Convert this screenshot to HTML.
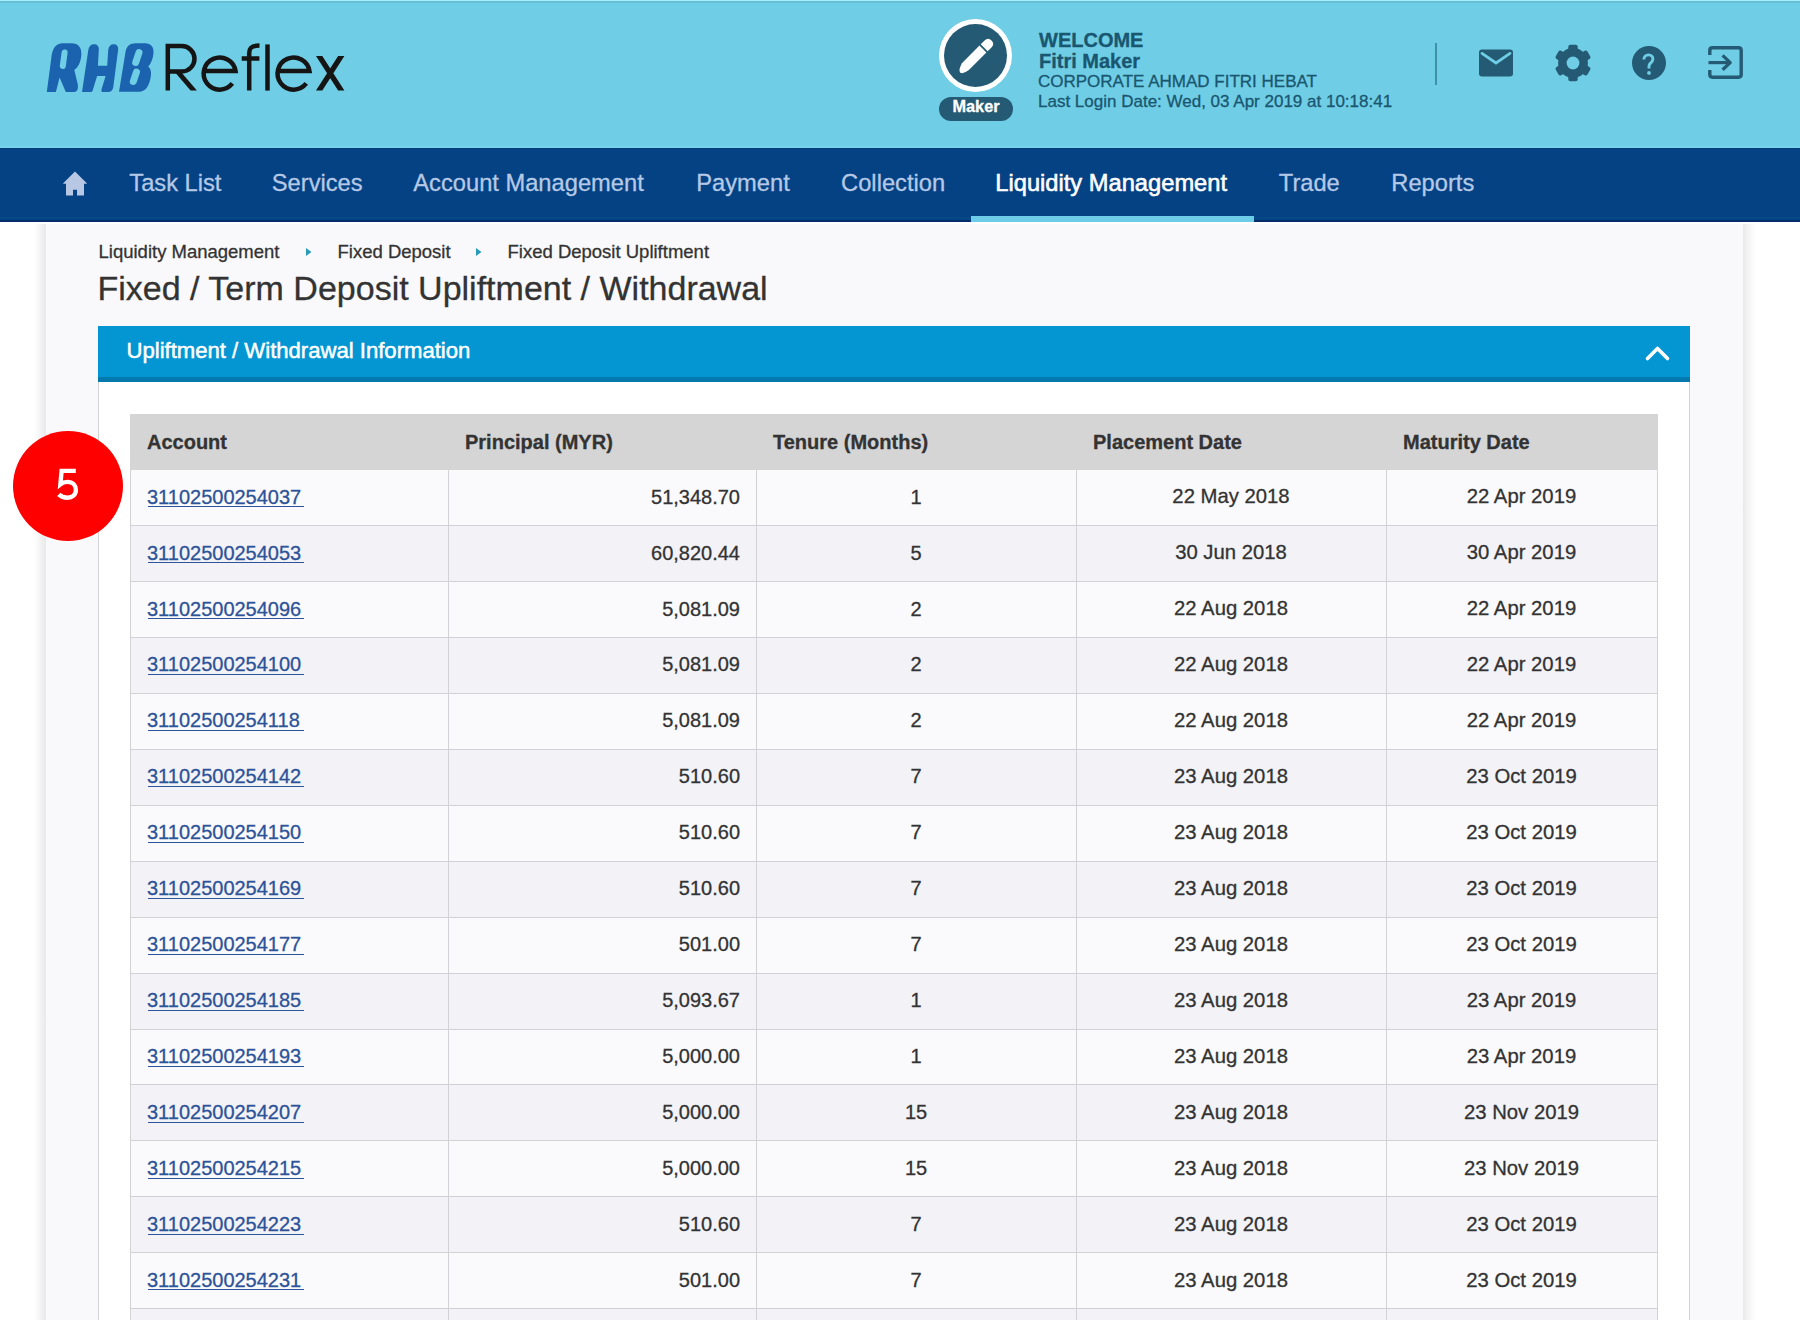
<!DOCTYPE html><html><head><meta charset="utf-8"><title>RHB Reflex</title><style>
*{margin:0;padding:0;box-sizing:border-box}
html,body{width:1800px;height:1320px;overflow:hidden;background:#fff;font-family:"Liberation Sans",sans-serif}
.a{position:absolute}
.t{position:absolute;white-space:nowrap;line-height:1;-webkit-text-stroke:0.3px currentColor}
</style></head><body>
<div class="a" style="left:0;top:0;width:1800px;height:148px;background:#6FCEE5"></div>
<div class="a" style="left:0;top:0;width:1800px;height:1px;background:#A3EDFD"></div>
<div class="a" style="left:0;top:1px;width:1800px;height:2px;background:#66BFD3"></div>
<svg class="a" style="left:0;top:0" width="360" height="100" viewBox="0 0 360 100"><path fill="#1B63AE" d="M46.8,92.1 L51.3,58 C52.3,48.5 55.5,43.2 63,43.2 L71.5,43.2 C78.5,43.2 82,47.5 81.3,55.5 C80.7,62 78.5,67 74.3,70 L77.6,83.5 C78.6,88.5 77.5,92.1 73.5,92.1 L65.8,92.1 L59.6,77.5 L55.9,92.1 Z"/><path stroke="#6FCEE5" stroke-width="6" stroke-linecap="round" d="M64.6,52.5 L62.8,66"/><path fill="#1B63AE" d="M82,92.1 L88.3,50 C88.9,46.2 91,44.2 94,44.2 C97,44.2 99.2,46.2 98.8,50 L97.9,65.7 L107.2,65.7 L108.2,50 C108.7,46.2 110.8,44.2 113.6,44.2 C116.6,44.2 118.6,46.2 118.1,50 L113.3,87 C112.8,90.5 111,92.1 108,92.1 L102.8,92.1 C101.5,92.1 101.2,91.2 101.5,89.5 L105.6,76 L97.1,76 L93,89.5 C92.5,91.3 91.8,92.1 90.5,92.1 Z"/><path fill="#1B63AE" d="M119,91.8 L125.5,52 C126.5,46.5 129.5,43.2 136,43.2 L145,43.2 C151,43.2 154,47 153.5,53 C153,59 151,63.5 148.3,66.4 C150.5,68.5 151.5,71.5 150.9,75.5 C149.8,85 146,91.8 139,91.8 Z"/><path stroke="#6FCEE5" stroke-width="7" stroke-linecap="round" d="M139,52.5 L135.7,62.5 M136.5,72 L133.3,81.5"/><g fill="none" stroke="#151515" stroke-width="4.5"><path d="M167.8,90.6 V46.1 H181.8 A12.7,12.7 0 0 1 181.8,71.5 H167.8"/><path stroke="none" fill="#151515" d="M174.3,71.5 L180.6,71.5 L196.9,90.6 L190.6,90.6 Z"/><path d="M203.9,71.1 H235.55 A16.05,16.05 0 1 0 232.35,83.48"/><path d="M277.8,71.1 H309.45 A16.05,16.05 0 1 0 306.25,83.48"/><path d="M249.2,90.6 V53 C249.2,47.5 252,45.5 259.5,45.5 M241.7,58.6 H259.4"/><path d="M267.5,44.4 V90.6"/><path stroke="none" fill="#151515" d="M316,56.1 L322.3,56.1 L344.4,90.6 L338.1,90.6 Z M338.1,56.1 L344.4,56.1 L322.3,90.6 L316,90.6 Z"/></g></svg>
<div class="a" style="left:938.5px;top:19px;width:73px;height:73px;border-radius:50%;background:#fff"></div>
<div class="a" style="left:943.5px;top:24px;width:63px;height:63px;border-radius:50%;background:#245A73"></div>
<svg class="a" style="left:945px;top:25px" width="62" height="62" viewBox="-31 -31 62 62"><g transform="rotate(-45)"><path d="M-23,0.5 Q-22,-3 -15,-4.9 L9.8,-4.9 L9.8,4.9 L-15,4.9 Q-22,4 -23,0.5 Z" fill="#fff"/><path d="M11.6,-4.9 L17,-4.9 Q22,-4.9 22,0 Q22,4.9 17,4.9 L11.6,4.9 Z" fill="#fff"/></g></svg>
<div class="a" style="left:939px;top:97px;width:74px;height:24px;border-radius:12px;background:#245A73"></div>
<div class="t" style="left:952.5px;top:98.00px;font-size:16.3px;color:#fff;font-weight:bold;">Maker</div>
<div class="t" style="left:1039px;top:30.17px;font-size:20px;color:#1A5670;font-weight:bold;">WELCOME</div>
<div class="t" style="left:1039px;top:51.07px;font-size:20px;color:#1A5670;font-weight:bold;">Fitri Maker</div>
<div class="t" style="left:1038px;top:72.81px;font-size:17px;color:#1A5670;">CORPORATE AHMAD FITRI HEBAT</div>
<div class="t" style="left:1038px;top:93.11px;font-size:17px;color:#1A5670;">Last Login Date: Wed, 03 Apr 2019 at 10:18:41</div>
<div class="a" style="left:1435px;top:43px;width:1.5px;height:42px;background:#3F91A9"></div>
<svg class="a" style="left:1479px;top:49px" width="35" height="28" viewBox="0 0 35 28"><rect x="0" y="0.5" width="34" height="27" rx="3" fill="#245A73"/><path d="M3,4.4 L17,14 L31,4.4" fill="none" stroke="#6FCEE5" stroke-width="2.8" stroke-linecap="round"/></svg>
<svg class="a" style="left:1552.5px;top:43px" width="40" height="40" viewBox="-20 -20 40 40"><g fill="#245A73"><circle r="14.9"/><rect x="-4.7" y="-18.3" width="9.4" height="9" rx="2" transform="rotate(0)"/><rect x="-4.7" y="-18.3" width="9.4" height="9" rx="2" transform="rotate(60)"/><rect x="-4.7" y="-18.3" width="9.4" height="9" rx="2" transform="rotate(120)"/><rect x="-4.7" y="-18.3" width="9.4" height="9" rx="2" transform="rotate(180)"/><rect x="-4.7" y="-18.3" width="9.4" height="9" rx="2" transform="rotate(240)"/><rect x="-4.7" y="-18.3" width="9.4" height="9" rx="2" transform="rotate(300)"/></g><circle r="6.4" fill="#6FCEE5"/></svg>
<svg class="a" style="left:1632px;top:46px" width="34" height="34" viewBox="0 0 34 34"><circle cx="17" cy="17" r="17" fill="#245A73"/><path d="M11.9,13.6 C11.9,10.5 14,8.9 16.6,8.9 C19.2,8.9 20.9,10.7 20.9,13 C20.9,15.2 19.6,16.4 18.2,17.5 C17.3,18.2 17,19 17,20.5 V22.4" fill="none" stroke="#6FCEE5" stroke-width="2.9"/><circle cx="17" cy="26.9" r="1.9" fill="#6FCEE5"/></svg>
<svg class="a" style="left:1706px;top:44px" width="38" height="36" viewBox="0 0 38 36"><path d="M3.8,11 V6.5 Q3.8,3.8 6.5,3.8 H32.5 Q35.2,3.8 35.2,6.5 V30.5 Q35.2,33.2 32.5,33.2 H6.5 Q3.8,33.2 3.8,30.5 V26" fill="none" stroke="#245A73" stroke-width="3.4"/><path d="M2.5,18.6 H24" stroke="#245A73" stroke-width="3.2"/><path d="M16.6,11.4 L24.2,18.6 L16.6,25.8" fill="none" stroke="#245A73" stroke-width="3.3" stroke-linejoin="round"/></svg>
<div class="a" style="left:0;top:148px;width:1800px;height:74px;background:#044284"></div>
<div class="a" style="left:0;top:217px;width:1800px;height:2px;background:#054886"></div>
<div class="a" style="left:0;top:220px;width:1800px;height:2px;background:#022D68"></div>
<div class="a" style="left:0;top:148px;width:1800px;height:1px;background:#023E72"></div>
<div class="a" style="left:0;top:146px;width:1800px;height:2px;background:#77D2EC"></div>
<div class="a" style="left:970.5px;top:215.5px;width:283px;height:6.5px;background:#6DCDE9"></div>
<svg class="a" style="left:62px;top:170px" width="26" height="27" viewBox="0 0 26 27"><path d="M13,1.5 L24.8,13.2 Q25.2,13.8 24.4,13.8 L22,13.8 L22,25 Q22,25.5 21.5,25.5 L15,25.5 L15,19.8 L11,19.8 L11,25.5 L4.5,25.5 Q4,25.5 4,25 L4,13.8 L1.6,13.8 Q0.8,13.8 1.2,13.2 Z" fill="#B8C8E4"/></svg>
<div class="t" style="left:129.3px;top:172.44px;font-size:23.7px;color:#B5C9E6;">Task List</div>
<div class="t" style="left:271.8px;top:172.44px;font-size:23.7px;color:#B5C9E6;">Services</div>
<div class="t" style="left:413.3px;top:172.44px;font-size:23.7px;color:#B5C9E6;">Account Management</div>
<div class="t" style="left:696.3px;top:172.44px;font-size:23.7px;color:#B5C9E6;">Payment</div>
<div class="t" style="left:841.0999999999999px;top:172.44px;font-size:23.7px;color:#B5C9E6;">Collection</div>
<div class="t" style="left:995.3px;top:172.44px;font-size:23.7px;color:#fff;-webkit-text-stroke:0.55px #fff;">Liquidity Management</div>
<div class="t" style="left:1278.8px;top:172.44px;font-size:23.7px;color:#B5C9E6;">Trade</div>
<div class="t" style="left:1391.3px;top:172.44px;font-size:23.7px;color:#B5C9E6;">Reports</div>
<div class="a" style="left:46px;top:224px;width:1697px;height:1100px;background:#F9F9FB"></div>
<div class="a" style="left:34px;top:224px;width:12px;height:1100px;background:linear-gradient(to right,#FFFFFF,#F6F6F6 40%,#E9E9E9)"></div>
<div class="a" style="left:1743px;top:224px;width:13px;height:1100px;background:linear-gradient(to right,#E8E8EA,#F4F4F4 40%,#FFFFFF)"></div>
<div class="t" style="left:98.5px;top:242.64px;font-size:18.5px;color:#333;">Liquidity Management</div>
<div class="t" style="left:337.5px;top:242.64px;font-size:18.5px;color:#333;">Fixed Deposit</div>
<div class="t" style="left:507.5px;top:242.64px;font-size:18.5px;color:#333;">Fixed Deposit Upliftment</div>
<svg class="a" style="left:305.75px;top:248px" width="6" height="8" viewBox="0 0 6 8"><path d="M0,0 L5.5,4 L0,8 Z" fill="#2A9BB7"/></svg>
<svg class="a" style="left:475.5px;top:248px" width="6" height="8" viewBox="0 0 6 8"><path d="M0,0 L5.5,4 L0,8 Z" fill="#2A9BB7"/></svg>
<div class="t" style="left:97.5px;top:271.32px;font-size:34px;color:#333;">Fixed / Term Deposit Upliftment / Withdrawal</div>
<div class="a" style="left:98px;top:326px;width:1592px;height:1000px;background:#fff;border-left:1px solid #D3D3D3;border-right:1px solid #D3D3D3"></div>
<div class="a" style="left:98px;top:326px;width:1592px;height:56px;background:#0396D2"></div>
<div class="a" style="left:98px;top:377px;width:1592px;height:5px;background:#0479AD"></div>
<div class="t" style="left:126.5px;top:339.69px;font-size:22.1px;color:#fff;-webkit-text-stroke:0.5px #fff;">Upliftment / Withdrawal Information</div>
<svg class="a" style="left:1644px;top:344px" width="27" height="18" viewBox="0 0 27 18"><path d="M3.5,14.5 L13.5,4.5 L23.5,14.5" fill="none" stroke="#fff" stroke-width="3.6" stroke-linecap="round" stroke-linejoin="round"/></svg>
<div class="a" style="left:130px;top:414px;width:1528px;height:56px;background:#D5D5D5"></div>
<div class="t" style="left:147px;top:432.47px;font-size:20px;color:#333;font-weight:bold;">Account</div>
<div class="t" style="left:465px;top:432.47px;font-size:20px;color:#333;font-weight:bold;">Principal (MYR)</div>
<div class="t" style="left:773px;top:432.47px;font-size:20px;color:#333;font-weight:bold;">Tenure (Months)</div>
<div class="t" style="left:1093px;top:432.47px;font-size:20px;color:#333;font-weight:bold;">Placement Date</div>
<div class="t" style="left:1403px;top:432.47px;font-size:20px;color:#333;font-weight:bold;">Maturity Date</div>
<div class="a" style="left:130px;top:470px;width:1528px;height:56px;background:#FAFAFC"></div>
<div class="a" style="left:130px;top:525px;width:1528px;height:1px;background:#D2D2D6"></div>
<div class="t" style="left:147px;top:486.57px;font-size:20px;color:#2D5399;">31102500254037</div>
<div class="a" style="left:147.5px;top:506px;width:156px;height:1px;background:#2D5399"></div>
<div class="t" style="left:448px;width:292px;text-align:right;top:486.57px;font-size:20px;color:#333">51,348.70</div>
<div class="t" style="left:756px;width:320px;text-align:center;top:486.57px;font-size:20px;color:#333">1</div>
<div class="t" style="left:1076px;width:310px;text-align:center;top:486.32px;font-size:20.3px;color:#333">22 May 2018</div>
<div class="t" style="left:1386px;width:271px;text-align:center;top:486.32px;font-size:20.3px;color:#333">22 Apr 2019</div>
<div class="a" style="left:130px;top:526px;width:1528px;height:56px;background:#F2F2F7"></div>
<div class="a" style="left:130px;top:581px;width:1528px;height:1px;background:#D2D2D6"></div>
<div class="t" style="left:147px;top:542.54px;font-size:20px;color:#2D5399;">31102500254053</div>
<div class="a" style="left:147.5px;top:562px;width:156px;height:1px;background:#2D5399"></div>
<div class="t" style="left:448px;width:292px;text-align:right;top:542.54px;font-size:20px;color:#333">60,820.44</div>
<div class="t" style="left:756px;width:320px;text-align:center;top:542.54px;font-size:20px;color:#333">5</div>
<div class="t" style="left:1076px;width:310px;text-align:center;top:542.29px;font-size:20.3px;color:#333">30 Jun 2018</div>
<div class="t" style="left:1386px;width:271px;text-align:center;top:542.29px;font-size:20.3px;color:#333">30 Apr 2019</div>
<div class="a" style="left:130px;top:582px;width:1528px;height:56px;background:#FAFAFC"></div>
<div class="a" style="left:130px;top:637px;width:1528px;height:1px;background:#D2D2D6"></div>
<div class="t" style="left:147px;top:598.51px;font-size:20px;color:#2D5399;">31102500254096</div>
<div class="a" style="left:147.5px;top:618px;width:156px;height:1px;background:#2D5399"></div>
<div class="t" style="left:448px;width:292px;text-align:right;top:598.51px;font-size:20px;color:#333">5,081.09</div>
<div class="t" style="left:756px;width:320px;text-align:center;top:598.51px;font-size:20px;color:#333">2</div>
<div class="t" style="left:1076px;width:310px;text-align:center;top:598.26px;font-size:20.3px;color:#333">22 Aug 2018</div>
<div class="t" style="left:1386px;width:271px;text-align:center;top:598.26px;font-size:20.3px;color:#333">22 Apr 2019</div>
<div class="a" style="left:130px;top:638px;width:1528px;height:56px;background:#F2F2F7"></div>
<div class="a" style="left:130px;top:693px;width:1528px;height:1px;background:#D2D2D6"></div>
<div class="t" style="left:147px;top:654.48px;font-size:20px;color:#2D5399;">31102500254100</div>
<div class="a" style="left:147.5px;top:674px;width:156px;height:1px;background:#2D5399"></div>
<div class="t" style="left:448px;width:292px;text-align:right;top:654.48px;font-size:20px;color:#333">5,081.09</div>
<div class="t" style="left:756px;width:320px;text-align:center;top:654.48px;font-size:20px;color:#333">2</div>
<div class="t" style="left:1076px;width:310px;text-align:center;top:654.23px;font-size:20.3px;color:#333">22 Aug 2018</div>
<div class="t" style="left:1386px;width:271px;text-align:center;top:654.23px;font-size:20.3px;color:#333">22 Apr 2019</div>
<div class="a" style="left:130px;top:694px;width:1528px;height:56px;background:#FAFAFC"></div>
<div class="a" style="left:130px;top:749px;width:1528px;height:1px;background:#D2D2D6"></div>
<div class="t" style="left:147px;top:710.45px;font-size:20px;color:#2D5399;">31102500254118</div>
<div class="a" style="left:147.5px;top:730px;width:156px;height:1px;background:#2D5399"></div>
<div class="t" style="left:448px;width:292px;text-align:right;top:710.45px;font-size:20px;color:#333">5,081.09</div>
<div class="t" style="left:756px;width:320px;text-align:center;top:710.45px;font-size:20px;color:#333">2</div>
<div class="t" style="left:1076px;width:310px;text-align:center;top:710.20px;font-size:20.3px;color:#333">22 Aug 2018</div>
<div class="t" style="left:1386px;width:271px;text-align:center;top:710.20px;font-size:20.3px;color:#333">22 Apr 2019</div>
<div class="a" style="left:130px;top:750px;width:1528px;height:56px;background:#F2F2F7"></div>
<div class="a" style="left:130px;top:805px;width:1528px;height:1px;background:#D2D2D6"></div>
<div class="t" style="left:147px;top:766.42px;font-size:20px;color:#2D5399;">31102500254142</div>
<div class="a" style="left:147.5px;top:786px;width:156px;height:1px;background:#2D5399"></div>
<div class="t" style="left:448px;width:292px;text-align:right;top:766.42px;font-size:20px;color:#333">510.60</div>
<div class="t" style="left:756px;width:320px;text-align:center;top:766.42px;font-size:20px;color:#333">7</div>
<div class="t" style="left:1076px;width:310px;text-align:center;top:766.17px;font-size:20.3px;color:#333">23 Aug 2018</div>
<div class="t" style="left:1386px;width:271px;text-align:center;top:766.17px;font-size:20.3px;color:#333">23 Oct 2019</div>
<div class="a" style="left:130px;top:806px;width:1528px;height:56px;background:#FAFAFC"></div>
<div class="a" style="left:130px;top:861px;width:1528px;height:1px;background:#D2D2D6"></div>
<div class="t" style="left:147px;top:822.39px;font-size:20px;color:#2D5399;">31102500254150</div>
<div class="a" style="left:147.5px;top:842px;width:156px;height:1px;background:#2D5399"></div>
<div class="t" style="left:448px;width:292px;text-align:right;top:822.39px;font-size:20px;color:#333">510.60</div>
<div class="t" style="left:756px;width:320px;text-align:center;top:822.39px;font-size:20px;color:#333">7</div>
<div class="t" style="left:1076px;width:310px;text-align:center;top:822.14px;font-size:20.3px;color:#333">23 Aug 2018</div>
<div class="t" style="left:1386px;width:271px;text-align:center;top:822.14px;font-size:20.3px;color:#333">23 Oct 2019</div>
<div class="a" style="left:130px;top:862px;width:1528px;height:56px;background:#F2F2F7"></div>
<div class="a" style="left:130px;top:917px;width:1528px;height:1px;background:#D2D2D6"></div>
<div class="t" style="left:147px;top:878.36px;font-size:20px;color:#2D5399;">31102500254169</div>
<div class="a" style="left:147.5px;top:898px;width:156px;height:1px;background:#2D5399"></div>
<div class="t" style="left:448px;width:292px;text-align:right;top:878.36px;font-size:20px;color:#333">510.60</div>
<div class="t" style="left:756px;width:320px;text-align:center;top:878.36px;font-size:20px;color:#333">7</div>
<div class="t" style="left:1076px;width:310px;text-align:center;top:878.11px;font-size:20.3px;color:#333">23 Aug 2018</div>
<div class="t" style="left:1386px;width:271px;text-align:center;top:878.11px;font-size:20.3px;color:#333">23 Oct 2019</div>
<div class="a" style="left:130px;top:918px;width:1528px;height:56px;background:#FAFAFC"></div>
<div class="a" style="left:130px;top:973px;width:1528px;height:1px;background:#D2D2D6"></div>
<div class="t" style="left:147px;top:934.33px;font-size:20px;color:#2D5399;">31102500254177</div>
<div class="a" style="left:147.5px;top:954px;width:156px;height:1px;background:#2D5399"></div>
<div class="t" style="left:448px;width:292px;text-align:right;top:934.33px;font-size:20px;color:#333">501.00</div>
<div class="t" style="left:756px;width:320px;text-align:center;top:934.33px;font-size:20px;color:#333">7</div>
<div class="t" style="left:1076px;width:310px;text-align:center;top:934.08px;font-size:20.3px;color:#333">23 Aug 2018</div>
<div class="t" style="left:1386px;width:271px;text-align:center;top:934.08px;font-size:20.3px;color:#333">23 Oct 2019</div>
<div class="a" style="left:130px;top:974px;width:1528px;height:56px;background:#F2F2F7"></div>
<div class="a" style="left:130px;top:1029px;width:1528px;height:1px;background:#D2D2D6"></div>
<div class="t" style="left:147px;top:990.30px;font-size:20px;color:#2D5399;">31102500254185</div>
<div class="a" style="left:147.5px;top:1010px;width:156px;height:1px;background:#2D5399"></div>
<div class="t" style="left:448px;width:292px;text-align:right;top:990.30px;font-size:20px;color:#333">5,093.67</div>
<div class="t" style="left:756px;width:320px;text-align:center;top:990.30px;font-size:20px;color:#333">1</div>
<div class="t" style="left:1076px;width:310px;text-align:center;top:990.05px;font-size:20.3px;color:#333">23 Aug 2018</div>
<div class="t" style="left:1386px;width:271px;text-align:center;top:990.05px;font-size:20.3px;color:#333">23 Apr 2019</div>
<div class="a" style="left:130px;top:1030px;width:1528px;height:55px;background:#FAFAFC"></div>
<div class="a" style="left:130px;top:1084px;width:1528px;height:1px;background:#D2D2D6"></div>
<div class="t" style="left:147px;top:1046.27px;font-size:20px;color:#2D5399;">31102500254193</div>
<div class="a" style="left:147.5px;top:1066px;width:156px;height:1px;background:#2D5399"></div>
<div class="t" style="left:448px;width:292px;text-align:right;top:1046.27px;font-size:20px;color:#333">5,000.00</div>
<div class="t" style="left:756px;width:320px;text-align:center;top:1046.27px;font-size:20px;color:#333">1</div>
<div class="t" style="left:1076px;width:310px;text-align:center;top:1046.02px;font-size:20.3px;color:#333">23 Aug 2018</div>
<div class="t" style="left:1386px;width:271px;text-align:center;top:1046.02px;font-size:20.3px;color:#333">23 Apr 2019</div>
<div class="a" style="left:130px;top:1085px;width:1528px;height:56px;background:#F2F2F7"></div>
<div class="a" style="left:130px;top:1140px;width:1528px;height:1px;background:#D2D2D6"></div>
<div class="t" style="left:147px;top:1102.24px;font-size:20px;color:#2D5399;">31102500254207</div>
<div class="a" style="left:147.5px;top:1122px;width:156px;height:1px;background:#2D5399"></div>
<div class="t" style="left:448px;width:292px;text-align:right;top:1102.24px;font-size:20px;color:#333">5,000.00</div>
<div class="t" style="left:756px;width:320px;text-align:center;top:1102.24px;font-size:20px;color:#333">15</div>
<div class="t" style="left:1076px;width:310px;text-align:center;top:1101.99px;font-size:20.3px;color:#333">23 Aug 2018</div>
<div class="t" style="left:1386px;width:271px;text-align:center;top:1101.99px;font-size:20.3px;color:#333">23 Nov 2019</div>
<div class="a" style="left:130px;top:1141px;width:1528px;height:56px;background:#FAFAFC"></div>
<div class="a" style="left:130px;top:1196px;width:1528px;height:1px;background:#D2D2D6"></div>
<div class="t" style="left:147px;top:1158.21px;font-size:20px;color:#2D5399;">31102500254215</div>
<div class="a" style="left:147.5px;top:1178px;width:156px;height:1px;background:#2D5399"></div>
<div class="t" style="left:448px;width:292px;text-align:right;top:1158.21px;font-size:20px;color:#333">5,000.00</div>
<div class="t" style="left:756px;width:320px;text-align:center;top:1158.21px;font-size:20px;color:#333">15</div>
<div class="t" style="left:1076px;width:310px;text-align:center;top:1157.96px;font-size:20.3px;color:#333">23 Aug 2018</div>
<div class="t" style="left:1386px;width:271px;text-align:center;top:1157.96px;font-size:20.3px;color:#333">23 Nov 2019</div>
<div class="a" style="left:130px;top:1197px;width:1528px;height:56px;background:#F2F2F7"></div>
<div class="a" style="left:130px;top:1252px;width:1528px;height:1px;background:#D2D2D6"></div>
<div class="t" style="left:147px;top:1214.18px;font-size:20px;color:#2D5399;">31102500254223</div>
<div class="a" style="left:147.5px;top:1234px;width:156px;height:1px;background:#2D5399"></div>
<div class="t" style="left:448px;width:292px;text-align:right;top:1214.18px;font-size:20px;color:#333">510.60</div>
<div class="t" style="left:756px;width:320px;text-align:center;top:1214.18px;font-size:20px;color:#333">7</div>
<div class="t" style="left:1076px;width:310px;text-align:center;top:1213.93px;font-size:20.3px;color:#333">23 Aug 2018</div>
<div class="t" style="left:1386px;width:271px;text-align:center;top:1213.93px;font-size:20.3px;color:#333">23 Oct 2019</div>
<div class="a" style="left:130px;top:1253px;width:1528px;height:56px;background:#FAFAFC"></div>
<div class="a" style="left:130px;top:1308px;width:1528px;height:1px;background:#D2D2D6"></div>
<div class="t" style="left:147px;top:1270.15px;font-size:20px;color:#2D5399;">31102500254231</div>
<div class="a" style="left:147.5px;top:1289px;width:156px;height:1px;background:#2D5399"></div>
<div class="t" style="left:448px;width:292px;text-align:right;top:1270.15px;font-size:20px;color:#333">501.00</div>
<div class="t" style="left:756px;width:320px;text-align:center;top:1270.15px;font-size:20px;color:#333">7</div>
<div class="t" style="left:1076px;width:310px;text-align:center;top:1269.90px;font-size:20.3px;color:#333">23 Aug 2018</div>
<div class="t" style="left:1386px;width:271px;text-align:center;top:1269.90px;font-size:20.3px;color:#333">23 Oct 2019</div>
<div class="a" style="left:130px;top:1309px;width:1528px;height:56px;background:#F2F2F7"></div>
<div class="a" style="left:130px;top:1364px;width:1528px;height:1px;background:#D2D2D6"></div>
<div class="a" style="left:130px;top:470px;width:1px;height:900px;background:#D2D2D6"></div>
<div class="a" style="left:448px;top:470px;width:1px;height:900px;background:#D2D2D6"></div>
<div class="a" style="left:756px;top:470px;width:1px;height:900px;background:#D2D2D6"></div>
<div class="a" style="left:1076px;top:470px;width:1px;height:900px;background:#D2D2D6"></div>
<div class="a" style="left:1386px;top:470px;width:1px;height:900px;background:#D2D2D6"></div>
<div class="a" style="left:1657px;top:470px;width:1px;height:900px;background:#D2D2D6"></div>
<div class="a" style="left:13px;top:431px;width:110px;height:110px;border-radius:50%;background:#FE0000"></div>
<svg class="a" style="left:0;top:420px" width="140" height="130" viewBox="0 420 140 130"><path d="M75.8,470.9 H61.6 L60.4,484.2 C62.3,482.6 64.9,481.9 67.5,481.9 C72.9,481.9 75.9,485.6 75.9,490.1 C75.9,494.9 72.4,497.7 67.4,497.7 C64,497.7 61,496.6 58.8,494.4" fill="none" stroke="#fff" stroke-width="4.4"/></svg>
</body></html>
